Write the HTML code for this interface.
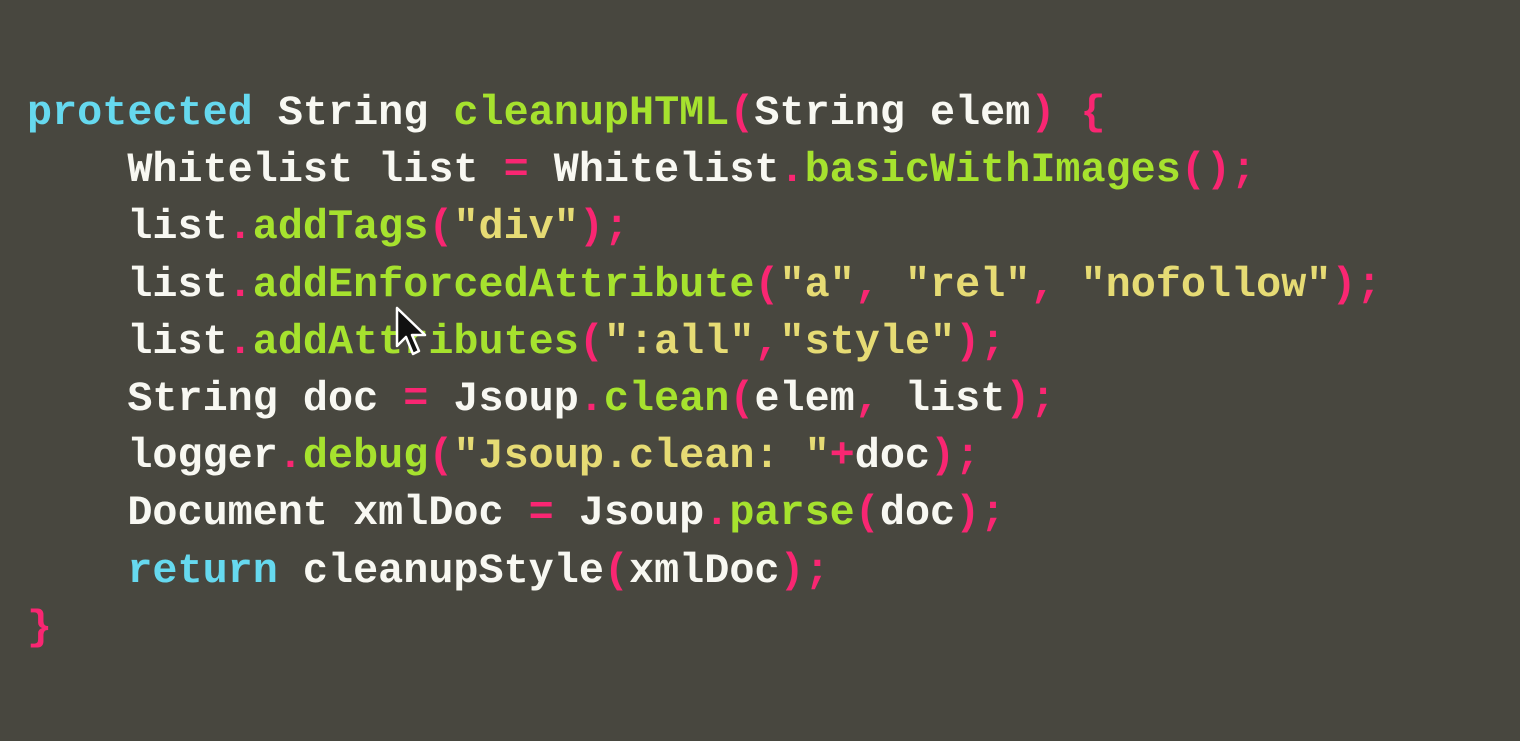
<!DOCTYPE html>
<html><head><meta charset="utf-8"><style>
html,body{margin:0;padding:0;}
body{width:1520px;height:741px;background:#48473f;overflow:hidden;position:relative;}
pre{margin:0;position:absolute;left:27px;top:85px;font-family:"Liberation Mono","DejaVu Sans Mono",monospace;font-size:41.8px;line-height:57.2px;color:#f8f8f2;font-weight:bold;}
.k{color:#66d9ef}.f{color:#a6e22e}.p{color:#f92672}.s{color:#e6db74}
</style></head><body>
<pre><span class="k">protected</span> String <span class="f">cleanupHTML</span><span class="p">(</span>String elem<span class="p">)</span> <span class="p">{</span>
    Whitelist list <span class="p">=</span> Whitelist<span class="p">.</span><span class="f">basicWithImages</span><span class="p">();</span>
    list<span class="p">.</span><span class="f">addTags</span><span class="p">(</span><span class="s">"div"</span><span class="p">);</span>
    list<span class="p">.</span><span class="f">addEnforcedAttribute</span><span class="p">(</span><span class="s">"a"</span><span class="p">,</span> <span class="s">"rel"</span><span class="p">,</span> <span class="s">"nofollow"</span><span class="p">);</span>
    list<span class="p">.</span><span class="f">addAttributes</span><span class="p">(</span><span class="s">":all"</span><span class="p">,</span><span class="s">"style"</span><span class="p">);</span>
    String doc <span class="p">=</span> Jsoup<span class="p">.</span><span class="f">clean</span><span class="p">(</span>elem<span class="p">,</span> list<span class="p">);</span>
    logger<span class="p">.</span><span class="f">debug</span><span class="p">(</span><span class="s">"Jsoup.clean: "</span><span class="p">+</span>doc<span class="p">);</span>
    Document xmlDoc <span class="p">=</span> Jsoup<span class="p">.</span><span class="f">parse</span><span class="p">(</span>doc<span class="p">);</span>
    <span class="k">return</span> cleanupStyle<span class="p">(</span>xmlDoc<span class="p">);</span>
<span class="p">}</span></pre>
<svg style="position:absolute;left:395px;top:306px" width="34" height="52" viewBox="0 0 34 52"><path d="M2 2 L2 40 L11 31 L18 48 L24 45 L17 29 L30 29 Z" fill="#111" stroke="#fff" stroke-width="2.5" stroke-linejoin="round"/></svg>
</body></html>
